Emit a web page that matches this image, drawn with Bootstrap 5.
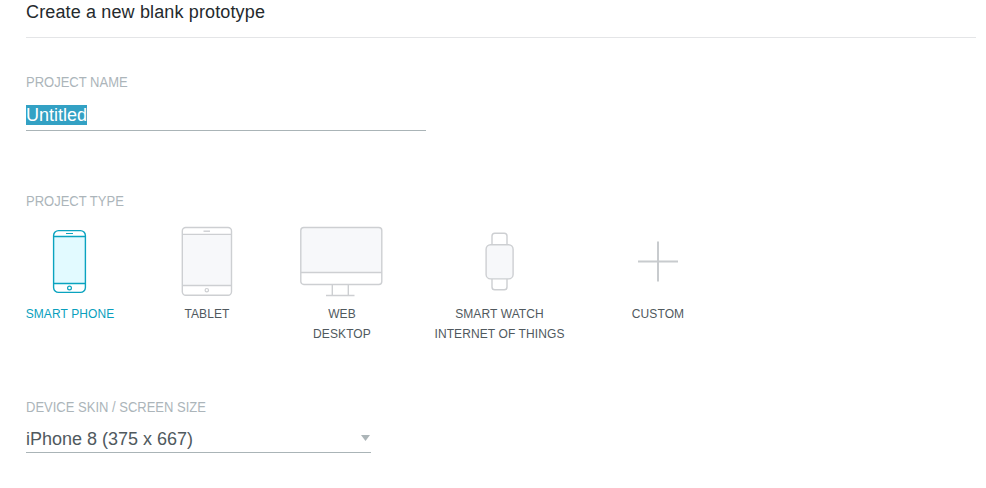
<!DOCTYPE html>
<html lang="en">
<head>
<meta charset="utf-8">
<meta name="viewport" content="width=device-width, initial-scale=1">
<title>Create a new blank prototype</title>
<link href="https://cdn.jsdelivr.net/npm/bootstrap@5.3.0/dist/css/bootstrap.min.css" rel="stylesheet">
<style>
body{font-family:"Liberation Sans",Arial,sans-serif;color:#50595e;height:488px;overflow:hidden}
.page{padding:0 10px 0 26px}
.page-title{font-size:18px;line-height:24px;letter-spacing:.14px;color:#252a2d;height:38px;border-bottom:1px solid #e4e5e7}
.name-section{padding-top:34px}
.type-section{padding-top:60px}
.skin-section{padding-top:14px}
.field-label{font-size:14px;line-height:20px;color:#acb5ba;display:block;transform:scaleX(.929);transform-origin:0 0}
.name-field{width:400px;height:39px;border-bottom:1px solid #aab4b7;font-size:18px;line-height:20px;padding-top:13px}
.picked{background:#33a1c4;color:#fff;display:inline-block;height:20px}
.kind{font-size:12px;line-height:20px;letter-spacing:.1px;text-align:center;color:#50595e}
.kind svg{display:block;margin:0 auto 7px;fill:none;stroke:#cdcfd2;stroke-width:1.4}
.kind .screen{fill:#f7f8fa}
.kind.chosen{color:#0a9fbd}
.kind.chosen svg{stroke:#0aa3bf}
.kind.chosen .screen{fill:#e2faff}
.kinds{height:172px;padding-top:14px}
.k-phone{width:90px;margin-left:-1px;margin-right:40px}
.k-tablet{width:104px}.k-web{width:166px}.k-watch{width:149px}.k-custom{width:168px}
.skin-select{width:345px;height:36px;border-bottom:1px solid #aab4b7;font-size:18px;line-height:20px;padding:0 1px 3px 0}
.skin-arrow{width:9px;height:6px;fill:#acb5b8}
</style>
</head>
<body>
<main class="page">
<h1 class="page-title fw-normal m-0">Create a new blank prototype</h1>
<section class="name-section">
<span class="field-label">PROJECT NAME</span>
<div class="name-field"><span class="picked">Untitled</span></div>
</section>
<section class="type-section">
<span class="field-label">PROJECT TYPE</span>
<div class="kinds d-flex align-items-start">
<div class="kind chosen k-phone text-nowrap">
<svg width="84" height="72"><path class="screen" stroke="none" d="M26 11.5h31v47H26z"/><rect x="25.6" y="5.6" width="31.8" height="61.8" rx="5"/><path d="M25.6 11.5h31.8M25.6 58.5h31.8"/><path stroke-width="1" d="M38 8.5h7"/><circle cx="41.5" cy="63" r="1.9" stroke-width="1.2"/></svg>SMART PHONE</div>
<div class="kind k-tablet">
<svg width="84" height="72"><path class="screen" stroke="none" d="M17 9.4h49v51H17z"/><rect x="17.3" y="2.5" width="49.2" height="67.8" rx="3.5"/><path d="M17.3 9.4h49.2M17.3 60.5h49.2"/><path d="M38.5 6.2h6.5"/><circle cx="41.8" cy="65.2" r="1.7" stroke-width="1.2"/></svg>TABLET</div>
<div class="kind k-web">
<svg width="84" height="72"><path class="screen" stroke="none" d="M1 3h81v44.5H1z"/><rect x=".8" y="2.5" width="81" height="57" rx="3"/><path d="M.8 47.5h81M32.3 59.5v11M48.3 59.5v11M26 70.5h28.5"/></svg>WEB<br>DESKTOP</div>
<div class="kind k-watch">
<svg width="85" height="72"><path d="M35 20v-9q0-2.8 2.8-2.8h9.4q2.8 0 2.8 2.8v9M35 54v8q0 2.8 2.8 2.8h9.4q2.8 0 2.8-2.8v-8"/><rect class="screen" x="29.1" y="19.7" width="27" height="34.2" rx="4.5"/></svg>SMART WATCH<br>INTERNET OF THINGS</div>
<div class="kind k-custom">
<svg width="84" height="72"><path stroke-width="2" stroke="#c8cbce" d="M22 36.5h40M42 16.5v40"/></svg>CUSTOM</div>
</div>
</section>
<section class="skin-section">
<span class="field-label">DEVICE SKIN / SCREEN SIZE</span>
<div class="skin-select d-flex justify-content-between align-items-end"><span class="d-block">iPhone 8 (375 x 667)</span><svg class="skin-arrow mb-2" viewBox="0 0 9 6"><path d="M0 0h9L4.5 6z"/></svg></div>
</section>
</main>
<script src="https://cdn.jsdelivr.net/npm/bootstrap@5.3.0/dist/js/bootstrap.bundle.min.js"></script>
</body>
</html>
